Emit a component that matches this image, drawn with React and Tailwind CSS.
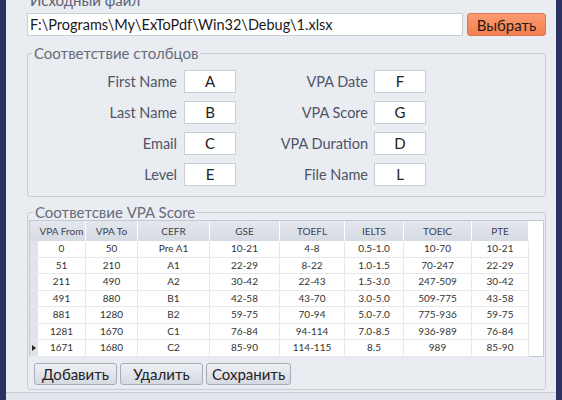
import React from "react";

const rows = [
  ["0", "50", "Pre A1", "10-21", "4-8", "0.5-1.0", "10-70", "10-21"],
  ["51", "210", "A1", "22-29", "8-22", "1.0-1.5", "70-247", "22-29"],
  ["211", "490", "A2", "30-42", "22-43", "1.5-3.0", "247-509", "30-42"],
  ["491", "880", "B1", "42-58", "43-70", "3.0-5.0", "509-775", "43-58"],
  ["881", "1280", "B2", "59-75", "70-94", "5.0-7.0", "775-936", "59-75"],
  ["1281", "1670", "C1", "76-84", "94-114", "7.0-8.5", "936-989", "76-84"],
  ["1671", "1680", "C2", "85-90", "114-115", "8.5", "989", "85-90"],
];

const cols = [
  ["VPA From", "w-[48px]"],
  ["VPA To", "w-[52px]"],
  ["CEFR", "w-[72px]"],
  ["GSE", "w-[70px]"],
  ["TOEFL", "w-[65px]"],
  ["IELTS", "w-[59px]"],
  ["TOEIC", "w-[68px]"],
  ["PTE", "w-[57px]"],
];

const mapping = [
  ["First Name", "A", "VPA Date", "F"],
  ["Last Name", "B", "VPA Score", "G"],
  ["Email", "C", "VPA Duration", "D"],
  ["Level", "E", "File Name", "L"],
];

function Cell({ children }) {
  return (
    <div className="w-[52px] h-[23px] bg-white border border-[#c9cdd5] flex items-center justify-center text-[15px] text-[#222]">
      {children}
    </div>
  );
}

function Btn({ children, w }) {
  return (
    <button className={`${w} h-[22px] rounded-[3px] border border-[#a7adb8] bg-gradient-to-b from-[#eef0f4] to-[#d5d9e1] text-[15px] text-[#1f2226] leading-none`}>
      {children}
    </button>
  );
}

export default function App() {
  return (
    <div className="w-[562px] h-[400px] overflow-hidden flex bg-[#e9ecf1] font-['Lato','Liberation_Sans',sans-serif]">
      <div className="w-[6px] bg-[#2b3160] shrink-0" />
      <div className="flex-1 flex flex-col pl-[21px] pr-[10px]">
        <div className="mt-[-7px] h-[15px] text-[15px] leading-[15px] text-[#5d6372] pl-[3px]">Исходный файл</div>
        <div className="mt-[5px] flex gap-[4px]">
          <div className="flex-1 h-[23px] bg-white border border-[#c9cdd5] flex items-center pl-[2px] text-[14.5px] text-[#1a1a1a]">
            F:\Programs\My\ExToPdf\Win32\Debug\1.xlsx
          </div>
          <button className="w-[79px] h-[23px] rounded-[3px] border border-[#d9784f] bg-gradient-to-b from-[#fb9a70] to-[#f27f50] text-[15px] text-[#2a1a14]">
            Выбрать
          </button>
        </div>

        <fieldset className="mt-[8px] border border-[#c8ccd4] rounded-[3px] h-[153px] pt-[8px]">
          <legend className="ml-[4px] px-[2px] text-[15px] text-[#666c7b] leading-[18px]">Соответствие столбцов</legend>
          <div className="flex flex-col gap-[8px]">
            {mapping.map(([l1, v1, l2, v2]) => (
              <div key={l1} className="flex items-center">
                <div className="w-[156px] text-right pr-[7px] text-[14.5px] text-[#4f5566]">{l1}</div>
                <Cell>{v1}</Cell>
                <div className="w-[138px] text-right pr-[6px] text-[14.5px] text-[#4f5566]">{l2}</div>
                <Cell>{v2}</Cell>
              </div>
            ))}
          </div>
        </fieldset>

        <fieldset className="mt-[6px] border border-[#c8ccd4] rounded-[3px] h-[187px] px-[1px]">
          <legend className="ml-[4px] px-[2px] text-[15px] text-[#666c7b] leading-[18px]">Соответсвие VPA Score</legend>
          <div className="mt-[-1px] h-[137px] bg-white border border-[#c4c8d0] text-[10px] text-[#333]">
            <div className="flex h-[20px]">
              <div className="w-[8px] bg-gradient-to-b from-[#e4e7ed] to-[#d6dae2]" />
              {cols.map(([name, w]) => (
                <div key={name} className={`${w} flex items-center justify-center border-r border-white bg-gradient-to-b from-[#e4e7ed] to-[#d6dae2] text-[#3d4250]`}>
                  {name}
                </div>
              ))}
            </div>
            {rows.map((r, i) => (
              <div key={i} className="flex h-[16.5px]">
                <div className="w-[8px] bg-[#dfe2e8] border-b border-[#eceef2] flex items-center justify-center">
                  {i === rows.length - 1 && (
                    <span className="w-0 h-0 border-y-[3px] border-y-transparent border-l-[4px] border-l-[#222]" />
                  )}
                </div>
                {r.map((v, j) => (
                  <div key={j} className={`${cols[j][1]} flex items-center justify-center border-r border-b border-[#e6e8ec]`}>
                    {v}
                  </div>
                ))}
              </div>
            ))}
          </div>
          <div className="mt-[6px] flex gap-[3px] pl-[5px]">
            <Btn w="w-[83px]">Добавить</Btn>
            <Btn w="w-[83px]">Удалить</Btn>
            <Btn w="w-[85px]">Сохранить</Btn>
          </div>
        </fieldset>
        <div className="mt-[2px] -ml-[21px] -mr-[10px] flex-1 border-t border-[#c6cad2] bg-[#e3e6ec]" />
      </div>
      <div className="w-[6px] bg-[#2b3160] shrink-0" />
    </div>
  );
}
